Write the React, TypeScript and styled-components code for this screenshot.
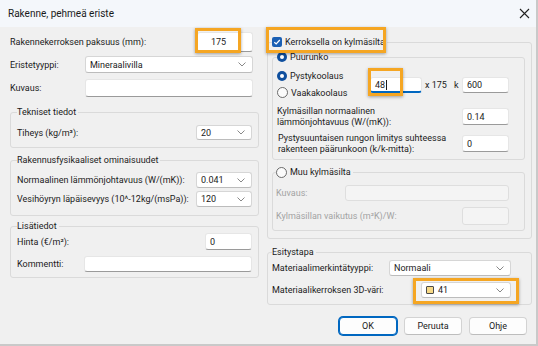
import React from 'react';
import styled, { createGlobalStyle } from 'styled-components';

const GlobalStyle = createGlobalStyle`
  html, body {
    margin: 0;
    padding: 0;
    background: #f0f0f0;
  }
  body {
    font-family: Roboto, "Liberation Sans", sans-serif;
    font-size: 9px;
    color: #1b1b1b;
  }
  * {
    box-sizing: border-box;
  }
`;

const Window = styled.div`
  position: relative;
  width: 538px;
  height: 346px;
  background: #f0f0f0;
  border-right: 2px solid #c9c9c9;
  border-bottom: 2px solid #c9c9c9;
  display: flex;
  flex-direction: column;
  overflow: hidden;
`;

const TitleBar = styled.div`
  height: 27px;
  flex: none;
  display: flex;
  align-items: center;
  justify-content: space-between;
  padding: 0 6px 0 8px;
  background: #f4f7fb;
`;

const TitleText = styled.span`
  font-size: 10px;
  color: #1a1a1a;
`;

const Body = styled.div`
  display: flex;
  gap: 8px;
  padding-left: 10px;
`;

const LeftColumn = styled.div`
  width: 249px;
  display: flex;
  flex-direction: column;
`;

const RightColumn = styled.div`
  width: 265px;
  display: flex;
  flex-direction: column;
`;

const Row = styled.div<{ $mt: number; $h: number; $pr?: number }>`
  display: flex;
  align-items: center;
  justify-content: space-between;
  height: ${(p) => p.$h}px;
  margin-top: ${(p) => p.$mt}px;
  padding-right: ${(p) => p.$pr ?? 0}px;
`;

const Label = styled.span<{ $disabled?: boolean }>`
  color: ${(p) => (p.$disabled ? '#a3a3a3' : '#1b1b1b')};
  white-space: nowrap;
`;

const TwoLineLabel = styled.span<{ $indent?: number }>`
  line-height: 11px;
  padding-left: ${(p) => p.$indent ?? 0}px;
`;

const TextBox = styled.div<{ $w: number; $pad?: number; $disabled?: boolean; $focus?: boolean }>`
  width: ${(p) => p.$w}px;
  height: 100%;
  display: flex;
  align-items: center;
  padding-left: ${(p) => p.$pad ?? 4}px;
  background: ${(p) => (p.$disabled ? '#f4f4f4' : '#ffffff')};
  border: 1px solid ${(p) => (p.$disabled ? '#dedede' : '#e6e6e6')};
  border-bottom: ${(p) =>
    p.$focus ? '2px solid #0067c0' : p.$disabled ? '1px solid #dedede' : '1px solid #9a9a9a'};
  border-radius: 3px;
  color: #1b1b1b;
`;

const Caret = styled.span`
  display: inline-block;
  width: 1px;
  height: 10px;
  margin-left: 1px;
  background: #1b1b1b;
`;

const Combo = styled.div<{ $w: number }>`
  width: ${(p) => p.$w}px;
  height: 100%;
  display: flex;
  align-items: center;
  justify-content: space-between;
  padding: 0 6px 0 4px;
  background: #ffffff;
  border: 1px solid #d6d6d6;
  border-bottom-color: #bcbcbc;
  border-radius: 3px;
`;

const ComboValue = styled.span`
  display: flex;
  align-items: center;
  gap: 4px;
`;

const Swatch = styled.span`
  width: 8px;
  height: 8px;
  background: #f7d986;
  border: 1px solid #4a4a4a;
  border-radius: 1px;
`;

const Group = styled.fieldset<{ $mt: number; $ml?: number; $pad: string }>`
  margin: ${(p) => p.$mt}px 0 0 ${(p) => p.$ml ?? 0}px;
  padding: ${(p) => p.$pad};
  border: 1px solid #dadada;
  border-radius: 3px;
  min-width: 0;
`;

const Legend = styled.legend`
  padding: 0 2px 0 0;
  height: 12px;
  line-height: 12px;
  display: flex;
  align-items: center;
  gap: 3px;
  color: #1b1b1b;
`;

const KoolausRow = styled.div`
  display: flex;
  align-items: flex-start;
  margin-top: 4px;
`;

const RadioStack = styled.div`
  width: 93px;
  display: flex;
  flex-direction: column;
`;

const RadioRow = styled.div`
  height: 17px;
  display: flex;
  align-items: center;
  gap: 3px;
`;

const InlineFields = styled.div`
  margin-top: 10px;
  height: 16px;
  display: flex;
  align-items: center;
`;

const InlineText = styled.span<{ $ml: number }>`
  margin-left: ${(p) => p.$ml}px;
`;

const ButtonRow = styled.div`
  display: flex;
  justify-content: flex-end;
  gap: 7px;
  margin-top: 12px;
  padding-right: 9px;
`;

const Button = styled.div<{ $primary?: boolean }>`
  width: 58px;
  height: 18px;
  display: flex;
  align-items: center;
  justify-content: center;
  background: #fdfdfd;
  border: 1px solid ${(p) => (p.$primary ? '#0067c0' : '#d3d3d3')};
  border-bottom-color: ${(p) => (p.$primary ? '#0067c0' : '#bdbdbd')};
  box-shadow: ${(p) => (p.$primary ? '0 0 0 1px #0067c0' : 'none')};
  border-radius: 4px;
  color: #1b1b1b;
`;

const Highlight = styled.div<{ $x: number; $y: number; $w: number; $h: number }>`
  position: absolute;
  left: ${(p) => p.$x}px;
  top: ${(p) => p.$y}px;
  width: ${(p) => p.$w}px;
  height: ${(p) => p.$h}px;
  border: 3px solid #f5a623;
  box-shadow: 0 1px 3px rgba(0, 0, 0, 0.35);
  pointer-events: none;
`;

const Chevron = () => (
  <svg width="8" height="5" viewBox="0 0 8 5">
    <polyline points="0.5,0.5 4,4 7.5,0.5" fill="none" stroke="#7a7a7a" strokeWidth="0.9" />
  </svg>
);

const CloseIcon = () => (
  <svg width="11" height="11" viewBox="0 0 11 11">
    <path d="M1 1 L10 10 M10 1 L1 10" stroke="#222" strokeWidth="1.1" />
  </svg>
);

const Radio = ({ checked }: { checked?: boolean }) =>
  checked ? (
    <svg width="10" height="10" viewBox="0 0 10 10">
      <circle cx="5" cy="5" r="5" fill="#0f4f9e" />
      <circle cx="5" cy="5" r="2" fill="#ffffff" />
    </svg>
  ) : (
    <svg width="11" height="11" viewBox="0 0 11 11">
      <circle cx="5.5" cy="5.5" r="5" fill="#fbfbfb" stroke="#5c5c5c" strokeWidth="0.9" />
    </svg>
  );

const CheckBox = () => (
  <svg width="10" height="10" viewBox="0 0 10 10">
    <rect x="0" y="0" width="10" height="10" rx="2" fill="#1a5fb4" />
    <polyline points="2.3,5.2 4.2,7 7.8,3" fill="none" stroke="#ffffff" strokeWidth="1.2" />
  </svg>
);

const App = () => {
  return (
    <>
      <GlobalStyle />
      <Window>
        <TitleBar>
          <TitleText>Rakenne, pehmeä eriste</TitleText>
          <CloseIcon />
        </TitleBar>
        <Body>
          <LeftColumn>
            <Row $mt={5} $h={20} $pr={6}>
              <Label>Rakennekerroksen paksuus (mm):</Label>
              <TextBox $w={56} $pad={13}>175</TextBox>
            </Row>
            <Row $mt={4} $h={17} $pr={6}>
              <Label>Eristetyyppi:</Label>
              <Combo $w={168}>
                <ComboValue>Mineraalivilla</ComboValue>
                <Chevron />
              </Combo>
            </Row>
            <Row $mt={6} $h={18} $pr={6}>
              <Label>Kuvaus:</Label>
              <TextBox $w={168} />
            </Row>

            <Group $mt={9} $pad="0 6px 7px 6px">
              <Legend>Tekniset tiedot</Legend>
              <Row $mt={7} $h={15}>
                <Label>Tiheys (kg/m³):</Label>
                <Combo $w={56}>
                  <ComboValue>20</ComboValue>
                  <Chevron />
                </Combo>
              </Row>
            </Group>

            <Group $mt={6} $pad="0 6px 8px 6px">
              <Legend>Rakennusfysikaaliset ominaisuudet</Legend>
              <Row $mt={6} $h={16}>
                <Label>Normaalinen lämmönjohtavuus (W/(mK)):</Label>
                <Combo $w={56}>
                  <ComboValue>0.041</ComboValue>
                  <Chevron />
                </Combo>
              </Row>
              <Row $mt={3} $h={16}>
                <Label>Vesihöyryn läpäisevyys (10^-12kg/(msPa)):</Label>
                <Combo $w={56}>
                  <ComboValue>120</ComboValue>
                  <Chevron />
                </Combo>
              </Row>
            </Group>

            <Group $mt={4} $pad="0 6px 5px 6px">
              <Legend>Lisätiedot</Legend>
              <Row $mt={1} $h={17}>
                <Label>Hinta (€/m²):</Label>
                <TextBox $w={47}>0</TextBox>
              </Row>
              <Row $mt={6} $h={16}>
                <Label>Kommentti:</Label>
                <TextBox $w={168} />
              </Row>
            </Group>
          </LeftColumn>

          <RightColumn>
            <Group $mt={9} $pad="0 6px 7px 4px">
              <Legend>
                <CheckBox />
                Kerroksella on kylmäsilta
              </Legend>

              <Group $mt={3} $pad="0 15px 7px 4px">
                <Legend>
                  <Radio checked />
                  Puurunko
                </Legend>
                <KoolausRow>
                  <RadioStack>
                    <RadioRow>
                      <Radio checked />
                      Pystykoolaus
                    </RadioRow>
                    <RadioRow>
                      <Radio />
                      Vaakakoolaus
                    </RadioRow>
                  </RadioStack>
                  <InlineFields>
                    <TextBox $w={52} $focus>
                      48
                      <Caret />
                    </TextBox>
                    <InlineText $ml={3}>x 175</InlineText>
                    <InlineText $ml={7}>k</InlineText>
                    <InlineText $ml={0} />
                  </InlineFields>
                  <InlineFields style={{ marginLeft: 'auto' }}>
                    <TextBox $w={47}>600</TextBox>
                  </InlineFields>
                </KoolausRow>
                <Row $mt={7} $h={17}>
                  <TwoLineLabel>
                    Kylmäsillan normaalinen
                    <br />
                    lämmönjohtavuus (W/(mK)):
                  </TwoLineLabel>
                  <TextBox $w={47}>0.14</TextBox>
                </Row>
                <Row $mt={10} $h={17}>
                  <TwoLineLabel $indent={1}>
                    Pystysuuntaisen rungon limitys suhteessa
                    <br />
                    rakenteen päärunkoon (k/k-mitta):
                  </TwoLineLabel>
                  <TextBox $w={47}>0</TextBox>
                </Row>
              </Group>

              <Group $mt={6} $pad="0 15px 5px 3px">
                <Legend>
                  <Radio />
                  Muu kylmäsilta
                </Legend>
                <Row $mt={7} $h={16}>
                  <Label $disabled>Kuvaus:</Label>
                  <TextBox $w={164} $disabled />
                </Row>
                <Row $mt={6} $h={18}>
                  <Label $disabled>Kylmäsillan vaikutus (m²K)/W:</Label>
                  <TextBox $w={47} $disabled />
                </Row>
              </Group>
            </Group>

            <Group $mt={7} $pad="0 20px 6px 4px">
              <Legend>Esitystapa</Legend>
              <Row $mt={2} $h={16}>
                <Label>Materiaalimerkintätyyppi:</Label>
                <Combo $w={122}>
                  <ComboValue>Normaali</ComboValue>
                  <Chevron />
                </Combo>
              </Row>
              <Row $mt={6} $h={16}>
                <Label>Materiaalikerroksen 3D-väri:</Label>
                <Combo $w={90}>
                  <ComboValue>
                    <Swatch />
                    41
                  </ComboValue>
                  <Chevron />
                </Combo>
              </Row>
            </Group>
          </RightColumn>
        </Body>

        <ButtonRow>
          <Button $primary>OK</Button>
          <Button>Peruuta</Button>
          <Button>Ohje</Button>
        </ButtonRow>

        <Highlight $x={195} $y={28} $w={46} $h={25} />
        <Highlight $x={266} $y={27} $w={120} $h={26} />
        <Highlight $x={368} $y={68} $w={35} $h={28} />
        <Highlight $x={413} $y={278} $w={106} $h={26} />
      </Window>
    </>
  );
};

export default App;
